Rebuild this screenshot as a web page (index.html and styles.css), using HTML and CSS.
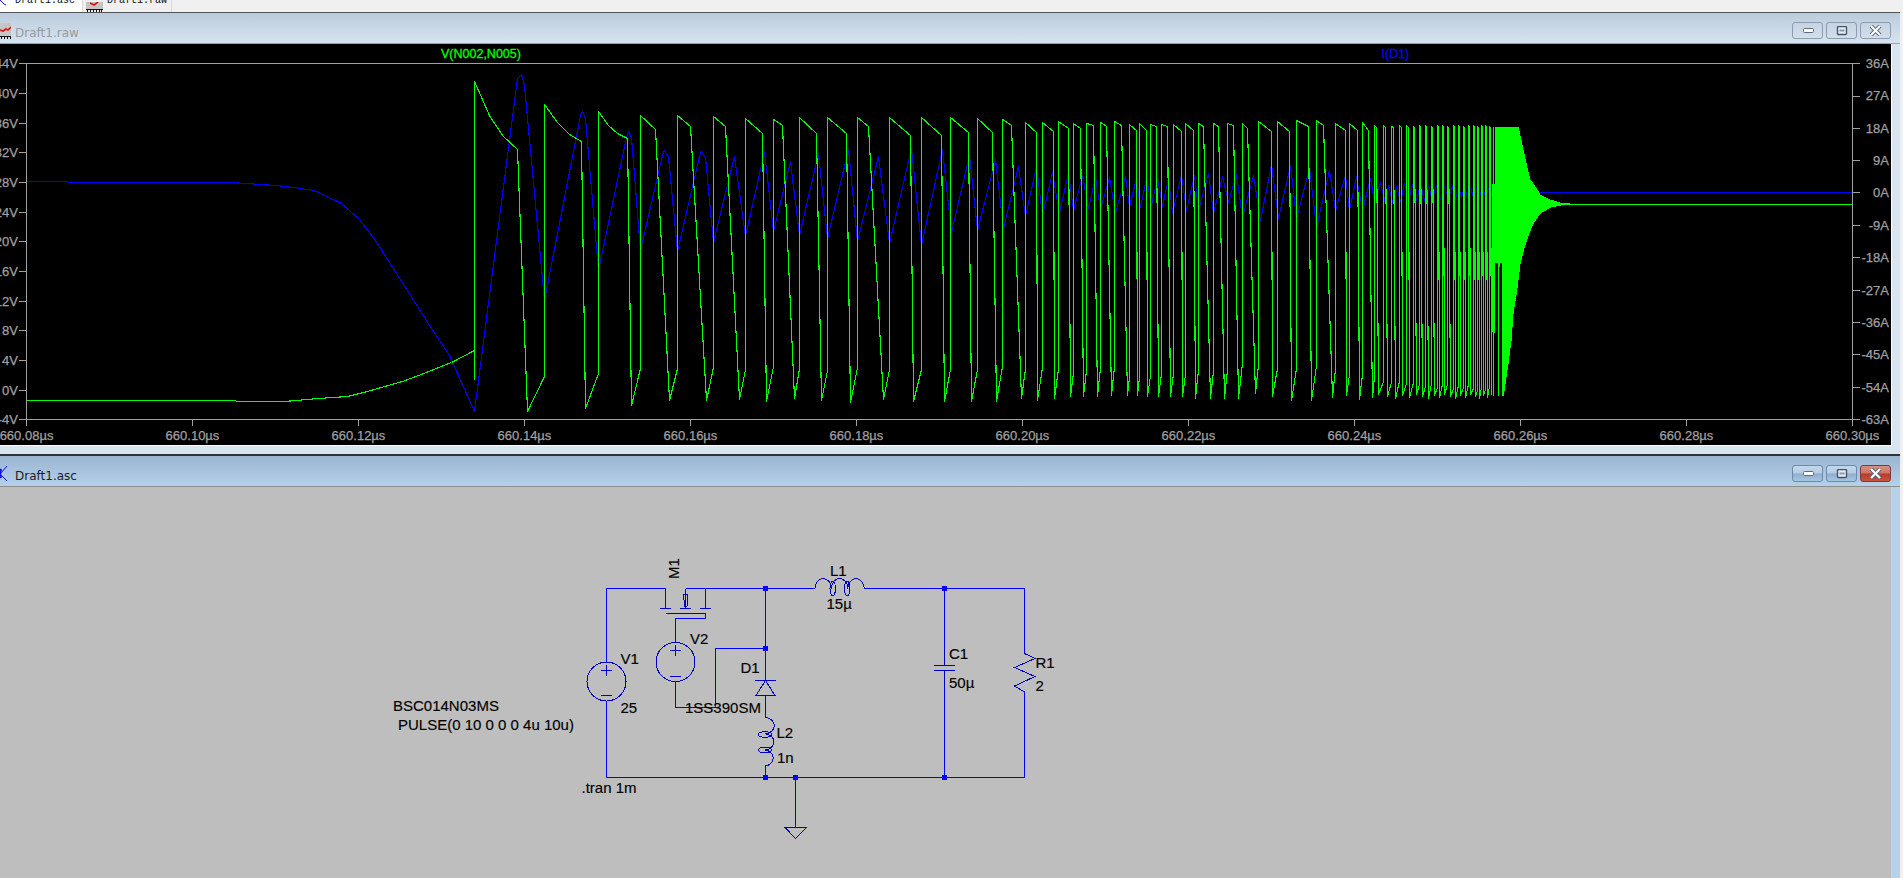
FILE: index.html
```html
<!DOCTYPE html>
<html lang="en">
<head>
<meta charset="utf-8">
<title>LTspice - Draft1</title>
<link rel="stylesheet" href="styles.css">
</head>
<body>
<nav class="tabs">
  <div class="tab tab-asc">
    <svg class="tab-icon-asc" width="7" height="6" viewBox="0 0 7 6"><path class="ico-blue" d="M0 0 L4 4 L6 5"/></svg>
    <span class="tab-label">Draft1.asc</span>
  </div>
  <div class="tab tab-raw">
    <svg class="tab-icon-raw" width="17" height="10" viewBox="0 0 17 10"><rect width="17" height="8" fill="#c4c4c4"/><path class="ico-red" d="M4 1 L8 3 L12 0"/><path class="ico-comb" d="M0 7.5 H17 M1.5 8 V10 M4.5 8 V10 M7.5 8 V10 M10.5 8 V10 M13.5 8 V10 M15.5 8 V10"/></svg>
    <span class="tab-label">Draft1.raw</span>
  </div>
</nav>

<section class="window window-inactive">
  <header class="titlebar">
    <svg class="title-icon" width="11" height="16" viewBox="0 0 11 16"><rect width="11" height="13" fill="#c6c6c6"/><path class="ico-red" d="M0 7 L3 8 L6 6 L8 7 L11 4"/><path class="ico-comb" d="M0 13.5 H11 M1.5 14 V16 M4.5 14 V16 M7.5 14 V16 M10.5 14 V16"/></svg>
    <span class="title-text">Draft1.raw</span>
    <div class="title-buttons">
      <button class="win-btn" type="button"><svg width="12" height="6" viewBox="0 0 12 6"><rect class="glyph" x="1.5" y="0.5" width="10" height="4" rx="1"/></svg></button>
      <button class="win-btn" type="button"><svg width="12" height="10" viewBox="0 0 12 10"><rect class="glyph-frame" x="1.5" y="0.5" width="9" height="8" rx="1"/><rect class="glyph-dark" x="3.5" y="3.5" width="5" height="2"/></svg></button>
      <button class="win-btn" type="button"><svg width="13" height="11" viewBox="0 0 13 11"><path class="x-outer" d="M2 1 L11 10 M11 1 L2 10"/><path class="x-inner" d="M2 1 L11 10 M11 1 L2 10"/></svg></button>
    </div>
  </header>
  <div class="client client-plot">
    <svg class="plot" width="1891" height="401" viewBox="0 44 1891 401">
      <text class="trace-label trace-v" x="441" y="57.5">V(N002,N005)</text>
      <text class="trace-label trace-i" x="1381.5" y="57.5">I(D1)</text>

      <polyline id="trace-current" class="trace trace-blue" points=""/>
      <polyline id="trace-voltage" class="trace trace-green" points=""/>

      <path class="axis" d="M19 63.5 H1860 M26.5 63.5 V426 M1852.5 63.5 V426 M19 419.5 H1860"/>
      <path class="axis" d="M19 93H26 M19 123H26 M19 152.5H26 M19 182H26 M19 212H26 M19 241.5H26 M19 271H26 M19 301H26 M19 330.5H26 M19 360H26 M19 390H26"/>
      <path class="axis" d="M1853 96H1860 M1853 128H1860 M1853 160.5H1860 M1853 192.5H1860 M1853 225.5H1860 M1853 257.5H1860 M1853 290H1860 M1853 322.5H1860 M1853 354.5H1860 M1853 387H1860"/>
      <path class="axis" d="M192.5 420V426 M358.5 420V426 M524.5 420V426 M690.5 420V426 M856.5 420V426 M1022.5 420V426 M1188.5 420V426 M1354.5 420V426 M1520.5 420V426 M1686.5 420V426"/>

      <g class="axis-text anchor-end">
        <text x="18" y="68">44V</text><text x="18" y="98">40V</text><text x="18" y="128">36V</text>
        <text x="18" y="157">32V</text><text x="18" y="187">28V</text><text x="18" y="217">24V</text>
        <text x="18" y="246">20V</text><text x="18" y="276">16V</text><text x="18" y="306">12V</text>
        <text x="18" y="335">8V</text><text x="18" y="365">4V</text><text x="18" y="395">0V</text>
        <text x="18" y="424">-4V</text>
        <text x="1889" y="68">36A</text><text x="1889" y="100">27A</text><text x="1889" y="133">18A</text>
        <text x="1889" y="165">9A</text><text x="1889" y="197">0A</text><text x="1889" y="230">-9A</text>
        <text x="1889" y="262">-18A</text><text x="1889" y="295">-27A</text><text x="1889" y="327">-36A</text>
        <text x="1889" y="359">-45A</text><text x="1889" y="392">-54A</text><text x="1889" y="424">-63A</text>
      </g>
      <g class="axis-text anchor-middle">
        <text x="26.5" y="440">660.08µs</text><text x="192.5" y="440">660.10µs</text><text x="358.5" y="440">660.12µs</text>
        <text x="524.5" y="440">660.14µs</text><text x="690.5" y="440">660.16µs</text><text x="856.5" y="440">660.18µs</text>
        <text x="1022.5" y="440">660.20µs</text><text x="1188.5" y="440">660.22µs</text><text x="1354.5" y="440">660.24µs</text>
        <text x="1520.5" y="440">660.26µs</text><text x="1686.5" y="440">660.28µs</text><text x="1852.5" y="440">660.30µs</text>
      </g>
    </svg>
  </div>
</section>

<section class="window window-active">
  <header class="titlebar">
    <svg class="title-icon title-icon-asc" width="8" height="16" viewBox="0 0 8 16"><path class="ico-blue-bold" d="M1 3 Q-1 8 1 12"/><path class="ico-blue" d="M1 7 L7 0 M1 9 L7 15"/></svg>
    <span class="title-text">Draft1.asc</span>
    <div class="title-buttons">
      <button class="win-btn" type="button"><svg width="12" height="6" viewBox="0 0 12 6"><rect class="glyph" x="1.5" y="0.5" width="10" height="4" rx="1"/></svg></button>
      <button class="win-btn" type="button"><svg width="12" height="10" viewBox="0 0 12 10"><rect class="glyph-frame" x="1.5" y="0.5" width="9" height="8" rx="1"/><rect class="glyph-dark" x="3.5" y="3.5" width="5" height="2"/></svg></button>
      <button class="win-btn win-close" type="button"><svg width="13" height="11" viewBox="0 0 13 11"><path class="x-outer" d="M2 1 L11 10 M11 1 L2 10"/><path class="x-inner" d="M2 1 L11 10 M11 1 L2 10"/></svg></button>
    </div>
  </header>
  <div class="client client-schematic">
    <svg class="schematic" width="1891" height="391" viewBox="0 487 1891 391">
      <!-- wires -->
      <path class="wire" d="M606.5 662 V588.5 H665.5 V608 M685.5 588.5 H815 M864.5 588.5 H1024.5 V653 M1024.5 692 V777.5 H606.5 V701 M705.5 588.5 V608 M705.5 613 V618.5 H675.5 V643 M675.5 681 V707.5 H715.5 V648.5 H765.5 M765.5 588.5 V681 M765.5 696 V717 M765.5 766 V777.5 M795.5 777.5 V827 M944.5 588.5 V654 M944.5 687 V777.5"/>
      <!-- MOSFET -->
      <path class="part" d="M660 608.5 H671 M680 608.5 H691 M700 608.5 H711 M665.5 613.5 H705.5 M685.5 588.5 V608"/>
      <path class="part" d="M683.5 594 H688 L687 606 H684.5 Z"/>
      <!-- sources -->
      <circle class="part" cx="606.5" cy="681.5" r="19.5"/>
      <path class="part" d="M601 670.5 H612 M606.5 665 V676 M601 695.5 H612"/>
      <circle class="part" cx="675.5" cy="662" r="19.5"/>
      <path class="part" d="M670 650.5 H681 M675.5 645 V656 M670 676 H681"/>
      <!-- D1 -->
      <path class="part" d="M755 680.5 H776 M765.5 680.5 L756 695.5 H775 Z"/>
      <!-- L2 -->
      <path class="part" d="M765.5 717.5 A10 8.2 0 0 1 765.5 733.8 A10 8.2 0 0 1 765.5 750 A10 8.2 0 0 1 765.5 766"/>
      <ellipse class="part" cx="765" cy="734.5" rx="6.5" ry="2.7"/>
      <ellipse class="part" cx="765" cy="750" rx="6.5" ry="2.7"/>
      <!-- L1 -->
      <path class="part" d="M815 588.5 A8.2 10 0 0 1 831.4 588.5 A8.2 10 0 0 1 847.8 588.5 A8.2 10 0 0 1 864.2 588.5"/>
      <ellipse class="part" cx="832.7" cy="588.5" rx="2.7" ry="7"/>
      <ellipse class="part" cx="847.3" cy="588.5" rx="2.7" ry="7"/>
      <!-- C1 -->
      <path class="part" d="M944.5 650 V665 M944.5 670 V687 M934 665.5 H955 M934 670.5 H955"/>
      <!-- R1 -->
      <path class="part" d="M1024.5 653.5 L1035 658.5 L1014.5 667.5 L1035 676.5 L1014.5 686 L1024.5 692"/>
      <!-- ground -->
      <path class="part" d="M785 827.5 H806.5 L795.5 838.5 Z"/>
      <!-- junctions -->
      <g class="junction">
        <rect x="763" y="586" width="5" height="5"/><rect x="763" y="646" width="5" height="5"/>
        <rect x="763" y="775" width="5" height="5"/><rect x="793" y="775" width="5" height="5"/>
        <rect x="942" y="586" width="5" height="5"/><rect x="942" y="775" width="5" height="5"/>
      </g>
      <!-- labels -->
      <g class="sch-text">
        <text transform="translate(679 579) rotate(-90)">M1</text>
        <text x="690" y="644">V2</text>
        <text x="620.5" y="664">V1</text>
        <text x="620.5" y="713">25</text>
        <text x="740.5" y="673">D1</text>
        <text x="685" y="713">1SS390SM</text>
        <text x="776.5" y="738">L2</text>
        <text x="777" y="763">1n</text>
        <text x="830" y="575.5">L1</text>
        <text x="826.5" y="609">15µ</text>
        <text x="393" y="711">BSC014N03MS</text>
        <text x="398" y="730">PULSE(0 10 0 0 0 4u 10u)</text>
        <text x="581.5" y="793">.tran 1m</text>
        <text x="949" y="659">C1</text>
        <text x="949" y="688">50µ</text>
        <text x="1035.5" y="668">R1</text>
        <text x="1035.5" y="691">2</text>
      </g>
    </svg>
  </div>
</section>
<script src="plot.js"></script>
</body>
</html>
```
FILE: styles.css
```css
* { box-sizing: border-box; }
html, body { margin: 0; padding: 0; }
body {
  width: 1903px;
  height: 878px;
  overflow: hidden;
  background: #f0f0f0;
  font-family: "Liberation Sans", Arial, sans-serif;
}

/* MDI tab strip, scrolled so only its lower part shows */
.tabs {
  display: flex;
  height: 12px;
  overflow: hidden;
  background: #f0f0f0;
}
.tab {
  display: flex;
  align-items: flex-end;
  height: 12px;
  padding-bottom: 6px;
}
.tab-asc { width: 83px; background: #fff; border-right: 1px solid #d8d8d8; }
.tab-raw { width: 89px; border-right: 1px solid #d8d8d8; padding-left: 3px; }
.tab-label {
  font: 10px/10px "Liberation Mono", monospace;
  color: #111;
  margin-left: 8px;
}
.tab-raw .tab-label { margin-left: 4px; }
.tab-icon-raw { position: relative; top: 6px; flex: none; }
.tab-icon-asc { flex: none; }

/* Windows */
.window { width: 1900px; }
.window-inactive {
  height: 442px;
  background: #d8e5f1;
  border-top: 1px solid #555;
}
.window-active {
  height: 424px;
  background: #b7d1e9;
  border-top: 2px solid #333;
}
.titlebar {
  display: flex;
  align-items: flex-end;
  height: 31px;
  padding: 0 9px 4px 0;
  border-bottom: 1px solid #9aa3ad;
}
.window-inactive .titlebar { background: linear-gradient(#bccbdb, #d6e4f1); }
.window-active .titlebar { background: linear-gradient(#9ab5d1, #b6d0e9); border-bottom-color: #8c8c8c; }
.title-icon { flex: none; }
.title-icon-asc { margin-right: 7px; }
.title-icon:not(.title-icon-asc) { margin-right: 4px; }
.title-text {
  flex: 1;
  font: 12px/14px "DejaVu Sans", Verdana, sans-serif;
  margin-bottom: -1px;
}
.window-inactive .title-text { color: #969ba1; }
.window-active .title-text { color: #1c1c1c; }
.title-buttons { display: flex; gap: 3px; }
.win-btn {
  display: flex;
  align-items: center;
  justify-content: center;
  width: 31px;
  height: 17px;
  padding: 0;
  border: 1px solid #8b9cb4;
  border-radius: 3px;
  background: linear-gradient(#c6d3e2, #d2deea);
}
.window-active .win-btn {
  border-color: #6f89a9;
  background: linear-gradient(#c3d7ea 0, #b4cce4 48%, #8eaccd 52%, #a9c5e1 100%);
}
.window-active .win-close {
  border-color: #7c3a3a;
  background: linear-gradient(#d98f82 0, #cf7464 48%, #b93a28 52%, #c6543f 100%);
}
.glyph { fill: #fff; stroke: #5c6b7f; stroke-width: 1; }
.glyph-frame { fill: #e6ecf3; stroke: #44556b; stroke-width: 1.4; }
.glyph-dark { fill: #44556b; opacity: .55; }
.x-outer { fill: none; stroke: #56657a; stroke-width: 4; }
.x-inner { fill: none; stroke: #fff; stroke-width: 2.2; }
.ico-red { fill: none; stroke: #e01010; stroke-width: 1.6; }
.ico-comb { fill: none; stroke: #111; stroke-width: 1; shape-rendering: crispEdges; }
.ico-blue { fill: none; stroke: #1010d8; stroke-width: 1; }
.ico-blue-bold { fill: none; stroke: #1010d8; stroke-width: 2.4; }

/* Client areas */
.client { width: 1892px; }
.client-plot {
  height: 402px;
  background: #000;
  border-right: 1px solid #fff;
  border-bottom: 1px solid #fff;
}
.client-schematic {
  height: 391px;
  background: #bebebe;
  border-right: 1px solid #d0d0d0;
}
.plot, .schematic { display: block; }

/* Plot */
.trace { fill: none; stroke-width: 1.1; stroke-linejoin: bevel; shape-rendering: crispEdges; }
.trace-blue { stroke: #0000ff; }
.trace-green { stroke: #00ff00; }
.axis { fill: none; stroke: #a0a0a0; stroke-width: 1; shape-rendering: crispEdges; }
.axis-text { fill: #a0a0a0; stroke: #a0a0a0; stroke-width: .25px; font: 13px "Liberation Sans", Arial, sans-serif; }
.anchor-end { text-anchor: end; }
.anchor-middle { text-anchor: middle; }
.trace-label { font: 12.5px "Liberation Sans", Arial, sans-serif; stroke-width: .3px; }
.trace-v { fill: #00ff00; stroke: #00ff00; }
.trace-i { fill: #0000ff; stroke: #0000ff; }

/* Schematic */
.wire { fill: none; stroke: #0000ff; stroke-width: 1; shape-rendering: crispEdges; }
.part { fill: none; stroke: #0000c4; stroke-width: 1; shape-rendering: crispEdges; }
.junction { fill: #0000ff; }
.sch-text { fill: #000; stroke: #000; stroke-width: .15px; font: 15px "Liberation Sans", Arial, sans-serif; }
```
FILE: plot.js
```js
// Transient traces of the LTspice plot, in the SVG's page coordinates.
(function () {
  // One row per switching cycle: rise x, top y, decay-end x, decay-end y, bottom x, bottom y
  var cycles = [
    [474.3, 81.7, 517.3, 149, 527.7, 411.7],
    [544.3, 104, 581.3, 141.7, 585.7, 408.3],
    [598.3, 111.7, 627.3, 138.3, 631.7, 405],
    [640.7, 115, 655.7, 129, 669.7, 400],
    [677.3, 115, 690.7, 126, 706.7, 400],
    [713.3, 116.7, 725.3, 126, 739.7, 399],
    [745, 118, 762.3, 133, 766.7, 401.7],
    [773.3, 119, 782.3, 125, 794.3, 398],
    [799.3, 117.7, 816.7, 133, 821.7, 400],
    [827.3, 117.7, 846.7, 133, 850.7, 402],
    [857.3, 117.3, 868.3, 126.7, 883.3, 399],
    [889.3, 117.3, 910.3, 135, 913.3, 401.7],
    [921.3, 117.3, 941.3, 135, 944.3, 401.7],
    [950.3, 117.3, 968, 132, 971.3, 401],
    [977, 118, 992.7, 132, 996.3, 401],
    [1002.3, 119, 1011.7, 125.7, 1021.7, 398.3],
    [1025.3, 122, 1036.7, 132, 1037.3, 400],
    [1042, 122, 1053.3, 131, 1054.3, 398.3],
    [1058.3, 121.7, 1068.3, 128, 1070, 396.7],
    [1073.3, 123, 1080, 128, 1083.3, 396.7],
    [1086, 123, 1093.3, 125, 1097.3, 396.7],
    [1100, 122, 1106.7, 126.7, 1111.7, 395],
    [1114.3, 121.7, 1121.7, 125, 1127.3, 395],
    [1129.3, 124, 1136, 130, 1137.3, 395],
    [1139.3, 123, 1146, 130, 1147.7, 396.7],
    [1150, 124, 1156.7, 126, 1158.3, 396.7],
    [1161, 124, 1167.3, 126.7, 1170.7, 396.7],
    [1173, 124, 1181.7, 131.7, 1182.3, 396.7],
    [1185.3, 123, 1193.3, 130, 1195.7, 398.3],
    [1198, 123, 1203.3, 126.7, 1210.7, 398.3],
    [1213.3, 123, 1218.3, 126.7, 1224.3, 398.3],
    [1227.3, 123, 1233.3, 125, 1238.3, 398.3],
    [1242.7, 123, 1247.3, 128, 1255, 393.3],
    [1258.3, 121, 1271, 131.7, 1272.7, 396.7],
    [1277.3, 121, 1289.3, 131, 1291.7, 400],
    [1296.3, 120.7, 1308.3, 126, 1311.7, 400],
    [1316, 120.7, 1323.3, 125, 1332.7, 397.7],
    [1335, 123, 1345, 130, 1346, 395],
    [1349, 123, 1357.3, 130, 1359.3, 399],
    [1362, 122.3, 1368.3, 130, 1372.7, 397.3]
  ];

  // Cycles shrink towards the end of conduction.
  var tailPitch = [9.3, 7.7, 8, 7, 7, 6, 6, 6, 6, 5, 5, 6, 5, 5, 5, 5, 4, 4, 4, 4, 4];
  var jx = 1374;
  tailPitch.forEach(function (p, i) {
    cycles.push([jx, 125 + (i % 3) * 0.7, jx + 0.3 * p, 127, jx + 0.5 * p, 394 + (i * 7 % 5)]);
    jx += p;
  });

  var upperEnv = [[1488, 127], [1518, 127], [1523, 150], [1526.7, 167], [1530, 180], [1535, 187], [1540, 195], [1550, 200], [1560, 203], [1572, 204.3]];
  var lowerEnv = [[1488, 396], [1503.3, 395], [1508, 363], [1511, 340], [1513, 313], [1516.7, 290], [1520, 263], [1524, 247], [1528, 235], [1533, 223], [1540, 213], [1550, 207], [1560, 205], [1572, 204.3]];

  function interp(env, x) {
    for (var i = 1; i < env.length; i++) {
      if (x <= env[i][0]) {
        var a = env[i - 1], b = env[i];
        return a[1] + (b[1] - a[1]) * (x - a[0]) / (b[0] - a[0]);
      }
    }
    return env[env.length - 1][1];
  }

  var green = [[26.5, 400.5], [235, 400.5], [236, 401.5], [284, 401.5], [318, 398], [347, 396], [367, 391], [402, 381], [426, 372], [451, 362], [474.3, 350.5]];
  cycles.forEach(function (c, i) {
    var next = i + 1 < cycles.length ? cycles[i + 1][0] : jx;
    var span = next - c[0];
    var rise = Math.min(32, span * 1.9);
    green.push([c[0], c[5] - rise]);
    green.push([c[0], c[1]]);
    if (i < 3) {
      // The first cycles discharge visibly along an exponential.
      green.push([c[0] + (c[2] - c[0]) * 0.36, c[1] + (c[3] - c[1]) * 0.5]);
      green.push([c[0] + (c[2] - c[0]) * 0.67, c[1] + (c[3] - c[1]) * 0.82]);
    }
    green.push([c[2], c[3]], [c[4], c[5]]);
  });
  // Solid burst where the ringing is too fast to resolve.
  var x = jx, n = 0;
  while (x < 1572) {
    var low = interp(lowerEnv, x);
    if (x < 1502 && n % 4 !== 0) { low = 262; }
    green.push([x, interp(upperEnv, x)], [x + 0.5, low]);
    x += x < 1494 ? 2 : 1;
    n += 1;
  }
  green.push([1572, 204.5], [1852.5, 204.5]);

  var blue = [[26.5, 181.5], [67, 181.5], [68, 182.5], [229, 182.5], [261, 184], [286, 186], [314, 190], [341, 203], [359, 219], [375.5, 240], [426.5, 320], [449, 355], [474, 411.7],
    [517, 78], [521.7, 74.3], [524, 85], [544.3, 300.7], [580.5, 115], [582.7, 111.7], [585, 118], [598.3, 270],
    [626, 137], [628.7, 131.7], [631, 137], [640.7, 250.7], [662, 155], [664.7, 150], [668, 156], [677.3, 251.7],
    [699, 156], [701.7, 151.7], [705, 157], [713.3, 242.7], [734.3, 156.7], [745, 236], [764, 151.7], [773.3, 231.7],
    [790.7, 161.7], [799.3, 235], [818, 153], [827.3, 238], [848.3, 149], [857.3, 241.7], [878.3, 156], [889.3, 243],
    [911.3, 148], [921.3, 245], [942.3, 149], [951.3, 232], [969.3, 155], [977.7, 230], [995, 159], [1003.3, 228],
    [1018.3, 166], [1025.3, 216], [1036.7, 166], [1042.7, 215], [1052.7, 172], [1059, 213], [1068.3, 172], [1073.3, 210],
    [1082.3, 175], [1088.3, 208], [1095.7, 177], [1100, 208], [1109.3, 177], [1115.3, 213], [1125.3, 176], [1129.3, 206],
    [1136, 178], [1140, 207], [1146.7, 178], [1151, 205], [1157.7, 178], [1162, 206], [1168.3, 178], [1172.7, 212],
    [1181, 175], [1186, 210], [1194.3, 175], [1198.3, 210], [1208.3, 173], [1213.3, 213], [1222.7, 176], [1228.3, 202],
    [1236.7, 174], [1242, 217], [1253.3, 175], [1260, 220], [1271.7, 164], [1278.3, 218], [1290, 165], [1296.7, 218],
    [1309, 168], [1316, 227], [1329.3, 170], [1335, 210], [1345, 175], [1349.3, 210], [1356.7, 176], [1362.7, 210],
    [1370.7, 178], [1374.7, 200], [1380.7, 182], [1385, 203], [1388, 185], [1392, 202], [1396, 186]];
  var bx = 1396, up = false;
  while (bx < 1512) {
    var amp = 9 - 7 * (bx - 1396) / 116;
    bx += bx < 1450 ? 4 : 3;
    blue.push([bx, 192.5 + (up ? -amp : amp)]);
    up = !up;
  }
  blue.push([1514, 192.5], [1852.5, 192.5]);

  // Snap to pixel centres, as the simulator's non-antialiased plotter does.
  function snap(v) { return Math.floor(v) + 0.5; }
  function toPoints(list) {
    return list.map(function (p) { return snap(p[0]) + ',' + snap(p[1]); }).join(' ');
  }
  document.getElementById('trace-voltage').setAttribute('points', toPoints(green));
  document.getElementById('trace-current').setAttribute('points', toPoints(blue));
})();
```
